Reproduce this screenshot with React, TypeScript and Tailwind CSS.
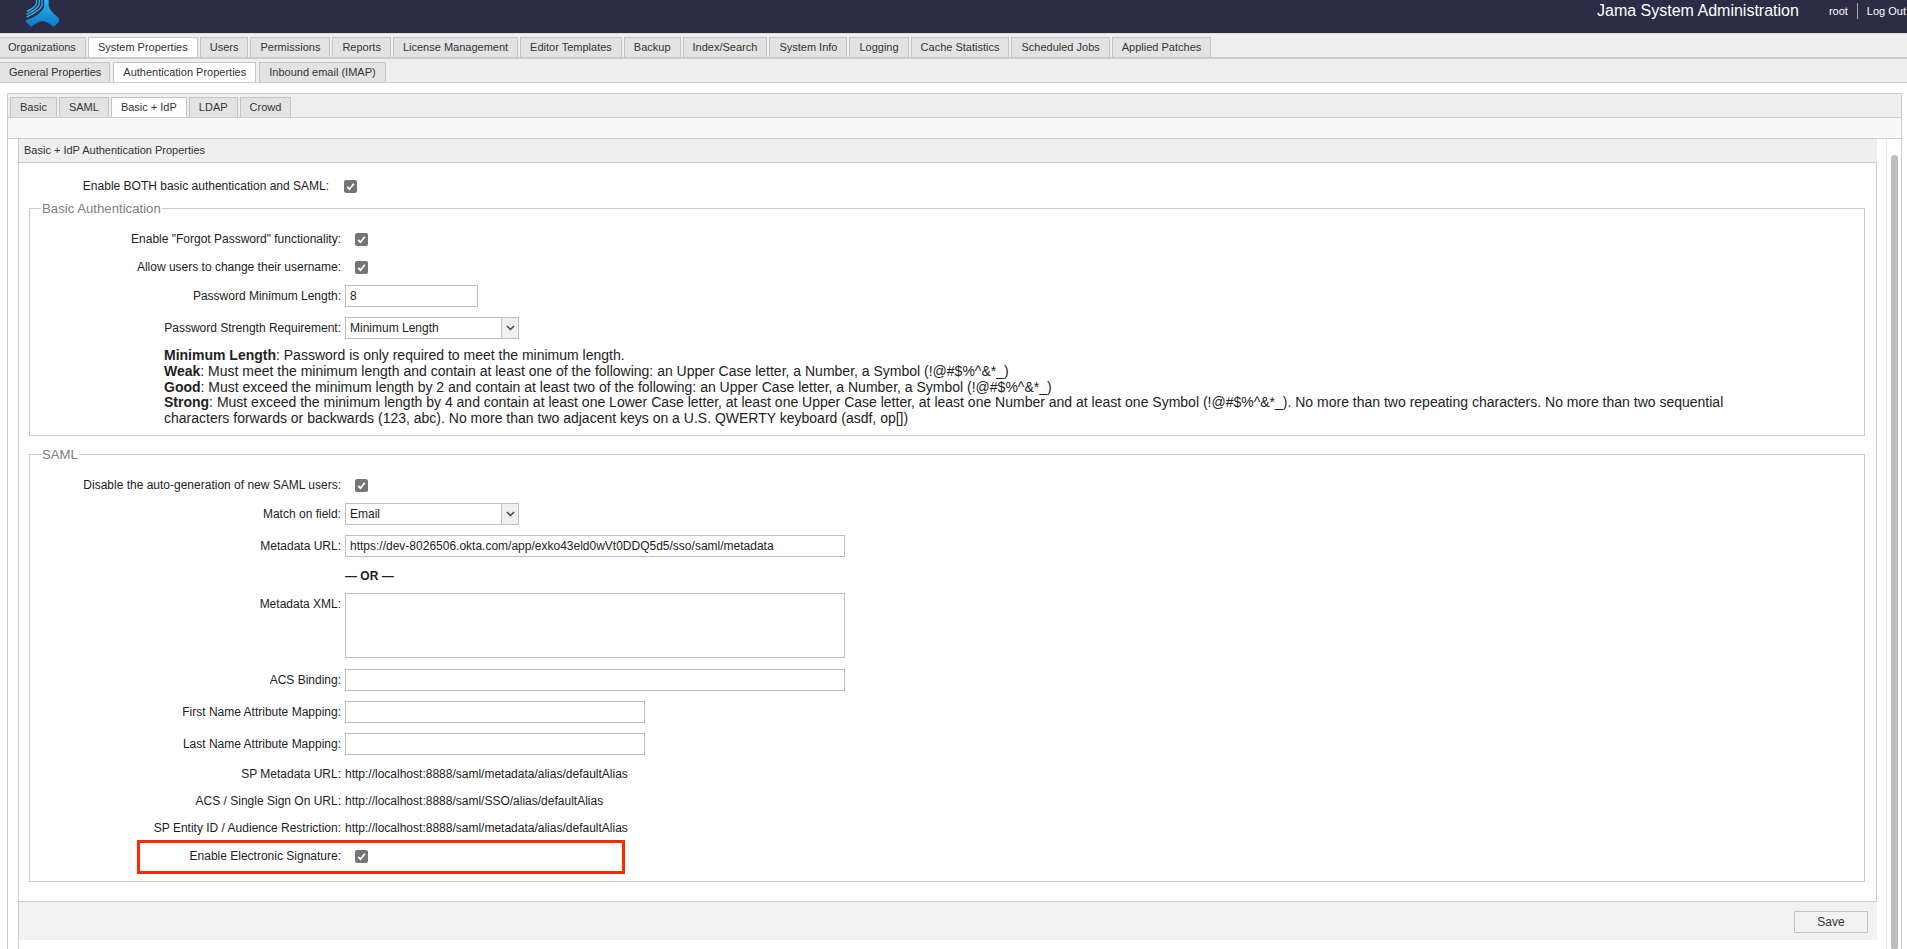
import type { ReactNode } from 'react';

const topTabs = [
  'Organizations',
  'System Properties',
  'Users',
  'Permissions',
  'Reports',
  'License Management',
  'Editor Templates',
  'Backup',
  'Index/Search',
  'System Info',
  'Logging',
  'Cache Statistics',
  'Scheduled Jobs',
  'Applied Patches',
];
const subTabs = ['General Properties', 'Authentication Properties', 'Inbound email (IMAP)'];
const authTabs = ['Basic', 'SAML', 'Basic + IdP', 'LDAP', 'Crowd'];

function Logo() {
  return (
    <svg width="33" height="27" viewBox="0 0 32 26" className="ml-[26px] shrink-0">
      <defs>
        <linearGradient id="logoFill" x1="0" y1="0" x2="0" y2="1">
          <stop offset="0" stopColor="#27b4ee" />
          <stop offset="1" stopColor="#0b78c4" />
        </linearGradient>
      </defs>
      <path
        d="M17.5 0H22V6Q23.5 11 32 17.5V21L27 26Q20 20.5 16 20.5Q12 20.5 5 26L0 21V19.5Q14 15 17.5 7Z"
        fill="url(#logoFill)"
      />
      <g fill="none" stroke="#29b2ec" strokeWidth="1.3">
        <path d="M15.5 0V5Q14 10 0.5 16.5" />
        <path d="M12.8 0V4Q11.5 8.5 0.5 13.8" />
        <path d="M10.2 0V3Q9 7 1 11" />
      </g>
    </svg>
  );
}

function Tab({ label, active, className }: { label: string; active?: boolean; className: string }) {
  return (
    <div
      className={`flex h-[20px] items-center whitespace-nowrap border border-b-0 border-[#c4c4c4] text-[11px] text-[#333] ${
        active ? 'bg-white' : 'bg-[#e3e3e3]'
      } ${className}`}
    >
      {label}
    </div>
  );
}

function CheckBox() {
  return (
    <span className="ml-[10px] flex h-[13px] w-[13px] items-center justify-center rounded-[2px] bg-[#757575]">
      <svg width="11" height="11" viewBox="0 0 11 11" fill="none">
        <path d="M2.2 5.8L4.4 8.2L8.8 2.8" stroke="#fff" strokeWidth="1.8" />
      </svg>
    </span>
  );
}

function Field({ label, className, children }: { label: string; className: string; children: ReactNode }) {
  return (
    <div className={`flex items-center ${className}`}>
      <div className="w-[311px] shrink-0 whitespace-nowrap text-right text-[12px] text-[#222]">{label}</div>
      <div className="ml-[4px] flex items-center">{children}</div>
    </div>
  );
}

function TextBox({ value, className }: { value?: string; className: string }) {
  return (
    <div
      className={`flex items-center overflow-hidden whitespace-nowrap border border-[#bfbfbf] bg-white pl-[4px] text-[12px] text-[#222] ${className}`}
    >
      {value}
    </div>
  );
}

function Picker({ value }: { value: string }) {
  return (
    <div className="flex h-[22px] w-[174px] border border-[#bfbfbf] bg-white text-[12px] text-[#222]">
      <div className="flex flex-1 items-center pl-[4px]">{value}</div>
      <div className="flex w-[17px] items-center justify-center border-l border-[#bfbfbf] bg-[#f0f0f0]">
        <svg width="9" height="6" viewBox="0 0 9 6" fill="none">
          <path d="M1 1L4.5 4.5L8 1" stroke="#444" strokeWidth="1.5" />
        </svg>
      </div>
    </div>
  );
}

function Group({ title, className, children }: { title: string; className: string; children: ReactNode }) {
  return (
    <fieldset className={`mx-[10px] mr-[11px] border border-[#ccc] ${className}`}>
      <legend className="ml-[11px] px-[1px] text-[13.2px] leading-[15px] text-[#808080]">{title}</legend>
      {children}
    </fieldset>
  );
}

function LinkRow({ label, url, className }: { label: string; url: string; className: string }) {
  return (
    <Field label={label} className={`h-[22px] ${className}`}>
      <span className="text-[12px] text-[#222]">{url}</span>
    </Field>
  );
}

export default function App() {
  return (
    <div className="h-[949px] w-[1907px] overflow-hidden bg-white font-['Liberation_Sans',Arial,sans-serif]">
      {/* header */}
      <header className="flex h-[33px] bg-[#2c2c46] text-white">
        <Logo />
        <div className="ml-auto mt-[1px] flex h-[20px] items-center pr-[1px]">
          <span className="text-[16px]">Jama System Administration</span>
          <span className="ml-[30px] text-[11px]">root</span>
          <span className="mx-[9px] h-[16px] w-px bg-[#aaa]" />
          <span className="whitespace-nowrap text-[11px]">Log Out</span>
        </div>
      </header>

      {/* main tabs */}
      <nav className="flex h-[26px] items-end gap-[2px] border-b-[2px] border-t border-b-[#ccc] border-t-[#ddd] bg-[#efefef]">
        {topTabs.map((t, i) => (
          <Tab
            key={t}
            label={t}
            active={t === 'System Properties'}
            className={i === 0 ? 'border-l-0 pl-[8px] pr-[9px]' : 'px-[9px]'}
          />
        ))}
      </nav>
      <nav className="flex h-[24px] items-end gap-[3px] border-b border-[#ccc] bg-[#efefef]">
        {subTabs.map((t, i) => (
          <Tab
            key={t}
            label={t}
            active={t === 'Authentication Properties'}
            className={i === 0 ? 'border-l-0 pl-[9px] pr-[8px]' : 'px-[9px]'}
          />
        ))}
      </nav>

      {/* outer panel */}
      <div className="ml-[7px] mr-[5px] mt-[10px] border border-[#ccc]">
        <div className="flex h-[24px] items-end gap-[2px] border-b border-[#ccc] bg-[#efefef] pl-[2px]">
          {authTabs.map((t) => (
            <Tab key={t} label={t} active={t === 'Basic + IdP'} className="px-[9px]" />
          ))}
        </div>
        <div className="h-[21px] border-b border-[#ccc] bg-[#f9f9f9]" />

        <div className="flex">
          <div className="w-[10px] shrink-0" />
          <div className="flex w-[1859px] shrink-0 flex-col border-l border-[#ccc]">
            <div className="flex h-[24px] items-center border-b border-[#ccc] bg-[#efefef] pl-[5px] text-[11px] text-[#333]">
              Basic + IdP Authentication Properties
            </div>

            <div className="h-[739px] border-b border-r border-[#ccc] bg-white pt-[12px]">
              <div className="flex h-[22px] items-center">
                <div className="w-[310px] whitespace-nowrap text-right text-[12px] text-[#222]">
                  Enable BOTH basic authentication and SAML:
                </div>
                <span className="ml-[5px]">
                  <CheckBox />
                </span>
              </div>

              <Group title="Basic Authentication" className="mt-[4px] h-[235px]">
                <Field label={'Enable "Forgot Password" functionality:'} className="mt-[12px] h-[22px]">
                  <CheckBox />
                </Field>
                <Field label="Allow users to change their username:" className="mt-[6px] h-[22px]">
                  <CheckBox />
                </Field>
                <Field label="Password Minimum Length:" className="mt-[7px] h-[22px]">
                  <TextBox value="8" className="h-[22px] w-[133px]" />
                </Field>
                <Field label="Password Strength Requirement:" className="mt-[10px] h-[22px]">
                  <Picker value="Minimum Length" />
                </Field>
                <div className="ml-[134px] mt-[9px] w-[1590px] text-[14px] leading-[15.8px] text-[#222]">
                  <div>
                    <b>Minimum Length</b>: Password is only required to meet the minimum length.
                  </div>
                  <div>
                    <b>Weak</b>: Must meet the minimum length and contain at least one of the following: an Upper Case
                    letter, a Number, a Symbol (!@#$%^&amp;*_)
                  </div>
                  <div>
                    <b>Good</b>: Must exceed the minimum length by 2 and contain at least two of the following: an Upper
                    Case letter, a Number, a Symbol (!@#$%^&amp;*_)
                  </div>
                  <div>
                    <b>Strong</b>: Must exceed the minimum length by 4 and contain at least one Lower Case letter, at
                    least one Upper Case letter, at least one Number and at least one Symbol (!@#$%^&amp;*_). No more
                    than two repeating characters. No more than two sequential
                  </div>
                  <div>
                    characters forwards or backwards (123, abc). No more than two adjacent keys on a U.S. QWERTY keyboard
                    (asdf, op[])
                  </div>
                </div>
              </Group>

              <Group title="SAML" className="mt-[11px] h-[435px]">
                <Field label="Disable the auto-generation of new SAML users:" className="mt-[12px] h-[22px]">
                  <CheckBox />
                </Field>
                <Field label="Match on field:" className="mt-[7px] h-[22px]">
                  <Picker value="Email" />
                </Field>
                <Field label="Metadata URL:" className="mt-[10px] h-[22px]">
                  <TextBox
                    value="https://dev-8026506.okta.com/app/exko43eld0wVt0DDQ5d5/sso/saml/metadata"
                    className="h-[22px] w-[500px]"
                  />
                </Field>
                <div className="ml-[315px] mt-[12px] h-[15px] text-[12px] font-bold leading-[15px] text-[#222]">
                  — OR —
                </div>
                <div className="mt-[9px] flex items-start">
                  <div className="w-[311px] pt-[2px] text-right text-[12px] text-[#222]">Metadata XML:</div>
                  <TextBox className="ml-[4px] h-[65px] w-[500px]" />
                </div>
                <Field label="ACS Binding:" className="mt-[11px] h-[22px]">
                  <TextBox className="h-[22px] w-[500px]" />
                </Field>
                <Field label="First Name Attribute Mapping:" className="mt-[10px] h-[22px]">
                  <TextBox className="h-[22px] w-[300px]" />
                </Field>
                <Field label="Last Name Attribute Mapping:" className="mt-[10px] h-[22px]">
                  <TextBox className="h-[22px] w-[300px]" />
                </Field>
                <LinkRow
                  label="SP Metadata URL:"
                  url="http://localhost:8888/saml/metadata/alias/defaultAlias"
                  className="mt-[8px]"
                />
                <LinkRow
                  label="ACS / Single Sign On URL:"
                  url="http://localhost:8888/saml/SSO/alias/defaultAlias"
                  className="mt-[5px]"
                />
                <LinkRow
                  label="SP Entity ID / Audience Restriction:"
                  url="http://localhost:8888/saml/metadata/alias/defaultAlias"
                  className="mt-[5px]"
                />
                <div className="relative mt-[6px]">
                  <Field label="Enable Electronic Signature:" className="h-[22px]">
                    <CheckBox />
                  </Field>
                  {/* annotation drawn over the screenshot */}
                  <div className="absolute left-[107px] top-[-5px] h-[34px] w-[488px] border-[3px] border-[#ff2a00]" />
                </div>
              </Group>
            </div>

            <div className="flex h-[38px] justify-end bg-[#f2f2f2] pr-[9px] pt-[9px]">
              <button className="h-[22px] w-[74px] border border-[#c4c4c4] bg-[#f2f2f2] text-[12px] text-[#333]">
                Save
              </button>
            </div>
          </div>

          {/* scrollbar */}
          <div className="ml-[9px] h-[811px] w-[15px] shrink-0 border-l border-[#e6e6e6] pl-[4px] pt-[16px]">
            <div className="h-[795px] w-[7px] rounded-full bg-[#bdbdbd]" />
          </div>
        </div>
      </div>
    </div>
  );
}
